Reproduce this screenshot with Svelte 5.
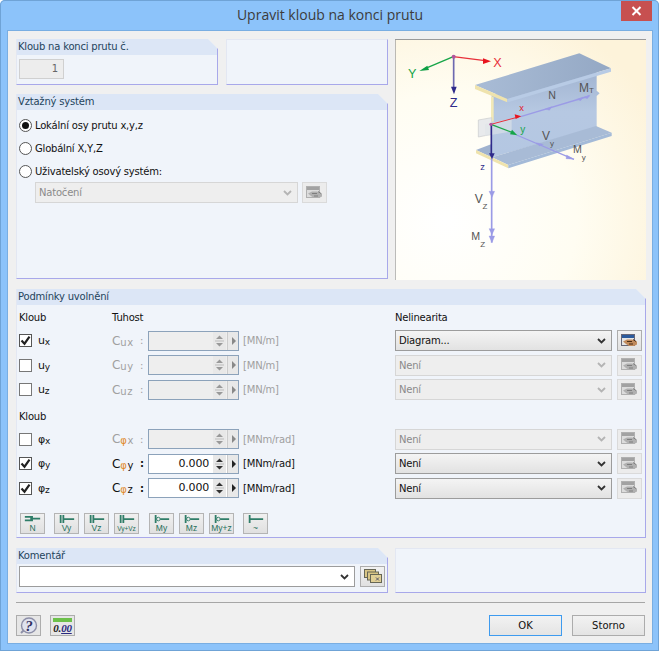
<script>
  const hinges = [
    { sym: 'u', sub: 'x', on: true, active: false, unit: '[MN/m]', nl: 'Diagram...', nlOn: true, btnOn: true },
    { sym: 'u', sub: 'y', on: false, active: false, unit: '[MN/m]', nl: 'Není', nlOn: false, btnOn: false },
    { sym: 'u', sub: 'z', on: false, active: false, unit: '[MN/m]', nl: 'Není', nlOn: false, btnOn: false },
  ];
  const rotations = [
    { sym: 'φ', sub: 'x', on: false, active: false, unit: '[MNm/rad]', nl: 'Není', nlOn: false, btnOn: false },
    { sym: 'φ', sub: 'y', on: true, active: true, unit: '[MNm/rad]', nl: 'Není', nlOn: true, btnOn: false },
    { sym: 'φ', sub: 'z', on: true, active: true, unit: '[MNm/rad]', nl: 'Není', nlOn: true, btnOn: false },
  ];
  const tools = [
    { label: 'N', kind: 'n' },
    { label: 'Vy', kind: 'v', gap: 'gap' },
    { label: 'Vz', kind: 'v' },
    { label: 'Vy+Vz', kind: 'v', small: true },
    { label: 'My', kind: 'm', gap: 'gap-wide' },
    { label: 'Mz', kind: 'm' },
    { label: 'My+z', kind: 'm' },
    { label: '~', kind: 't', gap: 'gap' },
  ];
</script>

{#snippet chevron(on)}
  <svg class="chev" width="9" height="6" viewBox="0 0 9 6">
    <path d="M1 1l3.5 3.5L8 1" fill="none" stroke={on ? '#333' : '#b4b4b4'} stroke-width="1.8" />
  </svg>
{/snippet}

{#snippet editBtn(on, dark)}
  <span class="icon-btn" class:dim={!on}>
    <svg width="17" height="14" viewBox="0 0 17 14">
      <rect x="0.5" y="0.5" width="13" height="11" fill={dark ? '#e4e4e4' : '#dcdcdc'} stroke={dark ? '#667' : '#b0b0b0'} />
      <rect x="1" y="1" width="12" height="3" fill={dark ? '#2b5a9c' : '#a2a2a2'} />
      <path d="M2 7.500l4-2h5l5 2v3l-3 1.500H8L5 10z" fill={dark ? '#c08a5c' : '#b0b0b0'} />
      <path d="M6 7.500h5M8 10h4M12 5.500l3 2" stroke={dark ? '#4a2c14' : '#7e7e7e'} fill="none" />
    </svg>
  </span>
{/snippet}

{#snippet row(r)}
  <span class="check" class:off={!r.active && !r.on}>
    {#if r.on}
      <svg width="13" height="13" viewBox="0 0 13 13"><path d="M2.5 6.5l3 3.2 5-7" fill="none" stroke="#222" stroke-width="2.2" /></svg>
    {/if}
  </span>
  <span class="sym" class:phi={r.sym === 'φ'}>{r.sym}<sub>{r.sub}</sub></span>
  <span class="coef" class:dis={!r.active}>C<sub class:phi-sub={r.sym === 'φ'}>{r.sym}</sub><sub class="subx">{r.sub}</sub></span>
  <span class="colon" class:dis={!r.active}>:</span>
  <span class="spin" class:live={r.active}>
    <span class="val">{r.active ? '0.000' : ''}</span>
    <span class="updown">
      <svg width="11" height="16" viewBox="0 0 11 16">
        <path d="M5.5 2.5l3.5 3.5H2zM5.5 13.5L2 10h7z" fill={r.active ? '#333' : '#999'} />
        <path d="M1 8h9" stroke="#bbb" />
      </svg>
    </span>
    <span class="more">
      <svg width="5" height="8" viewBox="0 0 5 8"><path d="M1 0l4 4-4 4z" fill={r.active ? '#222' : '#888'} /></svg>
    </span>
  </span>
  <span class="unit" class:dis={!r.active}>{r.unit}</span>
  <span class="select" class:sel-on={r.nlOn}>{r.nl}{@render chevron(r.nlOn)}</span>
  {@render editBtn(r.btnOn, r.btnOn)}
{/snippet}

<div class="window">
  <header class="title">
    <h1>Upravit kloub na konci prutu</h1>
    <span class="close">
      <svg width="11" height="10" viewBox="0 0 11 10"><path d="M1.5 1l8 8M9.5 1l-8 8" stroke="#fff" stroke-width="2" /></svg>
    </span>
  </header>

  <main class="content">
    <div class="top">
      <div class="left-col">
        <div class="first-row">
          <section class="panel p-no">
            <h2>Kloub na konci prutu č.</h2>
            <div class="no-box">1</div>
          </section>
          <section class="panel p-blank"></section>
        </div>
        <section class="panel p-sys">
          <h2>Vztažný systém</h2>
          <div class="radios">
            <div class="radio-row"><span class="radio sel"></span>Lokální osy prutu x,y,z</div>
            <div class="radio-row"><span class="radio"></span>Globální X,Y,Z</div>
            <div class="radio-row"><span class="radio"></span>Uživatelský osový systém:</div>
            <div class="sys-select">
              <span class="select rot">Natočení{@render chevron(false)}</span>
              {@render editBtn(false, false)}
            </div>
          </div>
        </section>
      </div>

      <div class="figure">
        <svg width="251" height="241" viewBox="15 117 753 723">
          <defs>
            <radialGradient id="bg" cx="20%" cy="75%" r="95%">
              <stop offset="0" stop-color="#ffffff" />
              <stop offset="0.55" stop-color="#fffdf2" />
              <stop offset="1" stop-color="#fdf3da" />
            </radialGradient>
            <linearGradient id="flange" x1="0" y1="0" x2="1" y2="0">
              <stop offset="0" stop-color="#a9bcd6" />
              <stop offset="1" stop-color="#94a8c4" />
            </linearGradient>
            <linearGradient id="web" x1="0" y1="0" x2="0" y2="1">
              <stop offset="0" stop-color="#9fb2cf" />
              <stop offset="0.5" stop-color="#b6c8e2" />
              <stop offset="1" stop-color="#b4c7e2" />
            </linearGradient>
          </defs>
          <rect x="15" y="117" width="753" height="723" fill="url(#bg)" />
          <path d="M15 840V118H768" fill="none" stroke="#9a9a9a" stroke-width="4" />

          <!-- I beam -->
          <path d="M305 285L620 200V272L629 280L620 288V380L306 472z" fill="url(#web)" />
          <path d="M303 290h8v75h-8z" fill="#f2e9b8" />
          <path d="M258 450L305 432V472z" fill="#9fb2cf" />
          <path d="M306 472L618 378L665 398L355 495z" fill="#a8bbd6" />
          <path d="M258 450L355 495V505L258 460z" fill="#efe3ad" />
          <path d="M355 495L665 398V408L355 505z" fill="#a4bad8" />
          <path d="M265 360l40-7v50l-40 8z" fill="#e8eaec" stroke="#c8cacc" stroke-width="2" />
          <path d="M285 372l80-16v38l-80 14z" fill="#dfe4ea" opacity="0.6" />
          <path d="M255 255L568 160L663 205L352 297z" fill="url(#flange)" />
          <path d="M255 255L352 297V307L255 267z" fill="#efe3ad" />
          <path d="M352 297L663 205V215L352 307z" fill="#b8cbe5" />

          <!-- internal forces -->
          <g fill="#9b9be6" stroke="#9b9be6">
            <path d="M392 350L598 288" stroke-width="4" />
            <path d="M466 327l20-7-8 11zM560 298l20-7-8 11zM580 292l20-7-8 11z" />
            <path d="M380 405L552 478" stroke-width="4" />
            <path d="M440 428l20 5-12 5zM530 465l22 13-24-2z" />
            <path d="M305 475V728" stroke-width="5" />
            <path d="M297 574h17l-8 18zM297 686h17l-8 18zM297 708h17l-8 20z" />
          </g>

          <!-- local axes -->
          <path d="M303 373L385 351" stroke="#e8303a" stroke-width="3" />
          <path d="M394 349l-20-6 3 14z" fill="#e8141e" />
          <path d="M303 373L368 398" stroke="#1fa64a" stroke-width="4" />
          <path d="M382 406l-22-3 6-14z" fill="#16a548" />
          <path d="M304 373V465" stroke="#2e2a8a" stroke-width="5" />
          <path d="M297 460h17l-8 18z" fill="#2e2a8a" />
          <circle cx="303" cy="373" r="5" fill="#b0569c" />

          <!-- global axes -->
          <path d="M190 170L285 182" stroke="#e8303a" stroke-width="4" />
          <path d="M303 184l-24-9v17z" fill="#e8141e" />
          <path d="M190 170L105 206" stroke="#16a548" stroke-width="4" />
          <path d="M88 213l24-16 5 13z" fill="#0d9f45" />
          <path d="M191 170V265" stroke="#6d69b0" stroke-width="5" />
          <path d="M183 260h17l-8 23z" fill="#2e2a8a" />
          <circle cx="191" cy="170" r="6" fill="#b0569c" />

          <g class="fig-text">
            <text x="310" y="200" font-size="38" fill="#e8303a">X</text>
            <text x="54" y="234" font-size="38" fill="#16a548">Y</text>
            <text x="179" y="322" font-size="38" fill="#2e2a8a">Z</text>
            <text x="388" y="334" font-size="28" fill="#e0202a">x</text>
            <text x="391" y="398" font-size="30" fill="#16a548">y</text>
            <text x="271" y="511" font-size="28" fill="#2e2a8a">z</text>
            <text x="475" y="298" font-size="32" fill="#555">N</text>
            <text x="567" y="275" font-size="36" fill="#555">M<tspan font-size="24" dy="3">T</tspan></text>
            <text x="456" y="420" font-size="36" fill="#555">V<tspan font-size="24" dy="18">y</tspan></text>
            <text x="549" y="458" font-size="32" fill="#555">M<tspan font-size="24" dy="22">y</tspan></text>
            <text x="254" y="608" font-size="36" fill="#555">V<tspan font-size="24" dy="18">Z</tspan></text>
            <text x="244" y="720" font-size="32" fill="#555">M<tspan font-size="24" dy="22">Z</tspan></text>
          </g>
        </svg>
      </div>
    </div>

    <section class="panel p-cond">
      <h2>Podmínky uvolnění</h2>
      <div class="grid">
        <span class="head first">Kloub</span>
        <span class="head second">Tuhost</span>
        <span class="head third">Nelinearita</span>
        {#each hinges as r}
          {@render row(r)}
        {/each}
        <span class="head first again">Kloub</span>
        {#each rotations as r}
          {@render row(r)}
        {/each}
      </div>
      <div class="tools">
        {#each tools as t}
          <span class="tool {t.gap ?? ''}">
            <svg width="19" height="10" viewBox="0 0 19 10">
              {#if t.kind === 'n'}
                <path d="M1 2h9M1 6h9M7 4h11" stroke="#2f7d68" stroke-width="2" fill="none" />
              {:else if t.kind === 'v'}
                <path d="M3 0v9M6 0v9M6 4.500h12" stroke="#2f7d68" stroke-width="2" fill="none" />
              {:else if t.kind === 'm'}
                <path d="M3 0v9M8 4.500h10" stroke="#2f7d68" stroke-width="2" fill="none" /><circle cx="6" cy="4.500" r="2" fill="none" stroke="#2f7d68" />
              {:else}
                <path d="M3 0v9M3 4.500h15" stroke="#2f7d68" stroke-width="2" fill="none" />
              {/if}
            </svg>
            <span class="tool-label" class:small={t.small}>{t.label}</span>
          </span>
        {/each}
      </div>
    </section>

    <div class="comment-row">
      <section class="panel p-comment">
        <h2>Komentář</h2>
        <div class="comment-line">
          <span class="select comment sel-on">{@render chevron(true)}</span>
          <span class="icon-btn copy">
            <svg width="18" height="15" viewBox="0 0 18 15">
              <rect x="0.500" y="0.500" width="11" height="8" fill="#d8c585" stroke="#665" />
              <rect x="3.500" y="3" width="11" height="8" fill="#d8c585" stroke="#665" />
              <rect x="6.500" y="5.500" width="11" height="8" fill="#e0cf96" stroke="#665" />
              <path d="M12 8.500l3 3M15 8.500l-3 3" stroke="#556" />
            </svg>
          </span>
        </div>
      </section>
      <section class="panel p-note"></section>
    </div>

    <hr />

    <footer class="foot">
      <span class="icon-btn foot-btn">
        <svg width="19" height="18" viewBox="0 0 19 18">
          <path d="M2 16l3-3" stroke="#8d8fa8" stroke-width="2" />
          <circle cx="10" cy="8.500" r="7.500" fill="#dfe2ee" stroke="#8d8fa8" stroke-width="1.400" />
          <text x="10" y="13.500" text-anchor="middle" class="q">?</text>
        </svg>
      </span>
      <span class="icon-btn foot-btn zero">
        <span class="green"></span>
        <span class="zeros">0.<u>00</u></span>
      </span>
      <span class="spacer"></span>
      <button class="btn default">OK</button>
      <button class="btn">Storno</button>
    </footer>
  </main>
</div>

<style>
  :global(body) {
    margin: 0;
    background: #fff;
  }

  .window {
    box-sizing: border-box;
    width: 659px;
    height: 651px;
    padding: 0 7px 8px 8px;
    background: #8cc3fa;
    border-radius: 5px 5px 0 0;
    box-shadow: inset 0 0 0 1px #6fa3d6;
    font-family: 'DejaVu Sans', Verdana, sans-serif;
    font-size: 10px;
    letter-spacing: -0.2px;
    color: #111;
  }

  .title {
    position: relative;
    box-sizing: border-box;
    height: 31px;
    padding-bottom: 2px;
    display: flex;
    align-items: center;
    justify-content: center;
  }
  h1 {
    margin: 0;
    font-family: 'Open Sans', sans-serif;
    font-size: 14px;
    font-weight: 400;
    letter-spacing: 0;
    color: #3c3c3c;
  }
  .close {
    position: absolute;
    top: 1px;
    right: 0;
    width: 31px;
    height: 20px;
    background: #c75050;
    display: flex;
    align-items: center;
    justify-content: center;
  }

  .content {
    box-sizing: border-box;
    height: 612px;
    padding: 8px 6px 0 8px;
    background: #f0f0f0;
    box-shadow: 0 0 0 1px #79aee2;
    display: flex;
    flex-direction: column;
  }

  .top {
    display: flex;
    gap: 7px;
  }
  .left-col {
    width: 372px;
    display: flex;
    flex-direction: column;
    gap: 9px;
  }
  .first-row {
    display: flex;
    gap: 8px;
  }

  .panel {
    box-sizing: border-box;
    background: #f0f4fa;
    border-right: 1px solid #a8a8ea;
    border-bottom: 1px solid #a8a8ea;
    border-left: 1px solid #e3e7f2;
    clip-path: polygon(0 0, calc(100% - 10px) 0, 100% 10px, 100% 100%, 0 100%);
  }
  .panel h2 {
    margin: 0;
    height: 16px;
    padding: 0 0 0 1px;
    background: #dce6f6;
    font-size: 10px;
    font-weight: 400;
    line-height: 16px;
    color: #24445c;
  }

  .p-no {
    width: 202px;
    height: 46px;
  }
  .p-blank {
    width: 162px;
    height: 46px;
    clip-path: none;
    border-top: 1px solid #e3e7f2;
  }
  .no-box {
    box-sizing: border-box;
    width: 45px;
    height: 20px;
    margin: 4px 0 0 2px;
    padding-right: 5px;
    background: #ededed;
    border: 1px solid #d0d0d0;
    text-align: right;
    line-height: 18px;
    color: #666;
  }

  .p-sys {
    height: 185px;
  }
  .radios {
    padding: 4px 0 0 2px;
  }
  .radio-row {
    height: 23px;
    display: flex;
    align-items: center;
    gap: 3px;
  }
  .radio {
    box-sizing: border-box;
    width: 13px;
    height: 13px;
    border: 1px solid #555;
    border-radius: 50%;
    background: #fff;
    display: flex;
    align-items: center;
    justify-content: center;
  }
  .radio.sel::after {
    content: '';
    width: 7px;
    height: 7px;
    border-radius: 50%;
    background: #111;
  }
  .sys-select {
    display: flex;
    align-items: center;
    gap: 4px;
    margin: -1px 0 0 16px;
  }

  .select {
    box-sizing: border-box;
    height: 21px;
    padding: 0 0 0 3px;
    display: flex;
    align-items: center;
    justify-content: space-between;
    background: #eeeeee;
    border: 1px solid #d6d6d6;
    color: #8a8a8a;
  }
  .select .chev {
    margin-right: 5px;
  }
  .sel-on {
    background: linear-gradient(#f4f4f4, #e2e2e2);
    border-color: #9c9c9c;
    color: #111;
  }
  .rot {
    width: 263px;
  }

  .icon-btn {
    box-sizing: border-box;
    width: 25px;
    height: 21px;
    display: flex;
    align-items: center;
    justify-content: center;
    background: linear-gradient(#f2f2f2, #e0e0e0);
    border: 1px solid #adadad;
  }
  .icon-btn.dim {
    background: #ececec;
    border-color: #dadada;
  }

  .figure {
    width: 251px;
    height: 241px;
    line-height: 0;
  }
  .fig-text text {
    font-family: 'Liberation Sans', Arial, sans-serif;
  }

  .p-cond {
    height: 249px;
    margin-top: 9px;
    width: 630px;
  }
  .grid {
    display: grid;
    grid-template-columns: 19px 74px 28px 8px 91px 156px 217px 25px;
    grid-template-rows: 22.5px;
    grid-auto-rows: 24.6px;
    align-items: center;
    padding: 1px 0 0 2px;
  }
  .grid > :global(.select) {
    width: 217px;
  }
  .grid > :global(.icon-btn) {
    margin-left: 5px;
  }
  .head {
    height: 19px;
    padding-top: 2px;
    line-height: 19px;
    align-self: start;
  }
  .first {
    grid-column: 1 / 3;
  }
  .second {
    grid-column: 3 / 6;
  }
  .third {
    grid-column: 7 / 9;
  }
  .first.again {
    grid-column: 1 / -1;
    padding-top: 5px;
  }

  .check {
    box-sizing: border-box;
    width: 13px;
    height: 13px;
    background: #fff;
    border: 1px solid #555;
    line-height: 0;
  }
  .check svg {
    margin: -1px;
  }
  .check.off {
    border-color: #777;
  }
  .sym {
    font-size: 11px;
  }
  .sym sub {
    font-size: 9px;
    vertical-align: -1px;
    line-height: 0;
  }
  .coef {
    font-size: 12px;
  }
  .coef sub {
    font-size: 10px;
    vertical-align: -1px;
    line-height: 0;
  }
  .coef .subx {
    margin-left: 1px;
  }
  .phi-sub {
    color: #e08a2c;
  }
  .dis {
    color: #a0a0a0;
  }
  .colon {
    font-weight: 700;
  }
  .colon.dis {
    font-weight: 400;
  }

  .spin {
    box-sizing: border-box;
    width: 91px;
    height: 20px;
    display: flex;
    align-items: stretch;
    background: #eeeeee;
    border: 1px solid #8ca2ba;
  }
  .spin.live {
    background: #fff;
  }
  .val {
    flex: 1;
    padding-right: 4px;
    text-align: right;
    line-height: 18px;
    font-size: 11px;
  }
  .updown {
    width: 13px;
    display: flex;
    align-items: center;
    justify-content: center;
    background: #e8e8e8;
  }
  .more {
    width: 10px;
    margin-left: 1px;
    display: flex;
    align-items: center;
    justify-content: center;
    background: #e8e8e8;
    border-left: 1px solid #ccc;
  }
  .unit {
    padding-left: 4px;
  }

  .tools {
    display: flex;
    gap: 5px;
    margin: 12.4px 0 0 3px;
  }
  .tool {
    box-sizing: border-box;
    width: 25px;
    height: 21px;
    padding-top: 1px;
    display: flex;
    flex-direction: column;
    align-items: center;
    background: linear-gradient(#f0f0f0, #e0e0e0);
    border: 1px solid #b4b4b4;
    line-height: 0;
  }
  .tool.gap {
    margin-left: 4px;
  }
  .tool.gap-wide {
    margin-left: 5px;
  }
  .tool-label {
    font-family: 'Liberation Sans', Arial, sans-serif;
    font-size: 8.500px;
    line-height: 9px;
    letter-spacing: 0;
    color: #1f6e5a;
    white-space: nowrap;
  }
  .tool-label.small {
    font-size: 6.500px;
  }

  .comment-row {
    display: flex;
    gap: 7px;
    margin-top: 10px;
  }
  .p-comment {
    width: 372px;
    height: 45px;
  }
  .p-note {
    width: 251px;
    height: 45px;
    clip-path: none;
    border-top: 1px solid #e3e7f2;
  }
  .comment-line {
    display: flex;
    align-items: center;
    gap: 5px;
    margin: 2px 0 0 2px;
  }
  .comment {
    width: 336px;
    background: #fff;
    justify-content: flex-end;
  }

  hr {
    width: 629px;
    margin: 9px 0 0;
    border: 0;
    border-top: 1px solid #a6a6a6;
    height: 0;
  }

  .foot {
    display: flex;
    align-items: center;
    gap: 9px;
    width: 629px;
    margin-top: 12px;
  }
  .foot-btn {
    width: 25px;
    height: 21px;
    background: #e6e6e6;
  }
  .q {
    font-family: 'Liberation Serif', serif;
    font-weight: 700;
    font-style: italic;
    font-size: 15px;
    fill: #303060;
  }
  .zero {
    flex-direction: column;
  }
  .green {
    width: 19px;
    height: 4px;
    background: #6cc04a;
  }
  .zeros {
    font-family: 'Liberation Serif', serif;
    font-style: italic;
    font-weight: 700;
    font-size: 11px;
    line-height: 12px;
    color: #222;
  }
  .zeros u {
    color: #2a2a80;
  }
  .spacer {
    flex: 1;
  }
  .btn {
    box-sizing: border-box;
    width: 73px;
    height: 21px;
    padding: 0;
    background: linear-gradient(#f2f2f2, #e4e4e4);
    border: 1px solid #acacac;
    font-family: inherit;
    font-size: 10px;
    color: #111;
  }
  .btn.default {
    border-color: #3e9bef;
  }
  .foot .btn + .btn {
    margin-left: 1px;
  }
</style>
